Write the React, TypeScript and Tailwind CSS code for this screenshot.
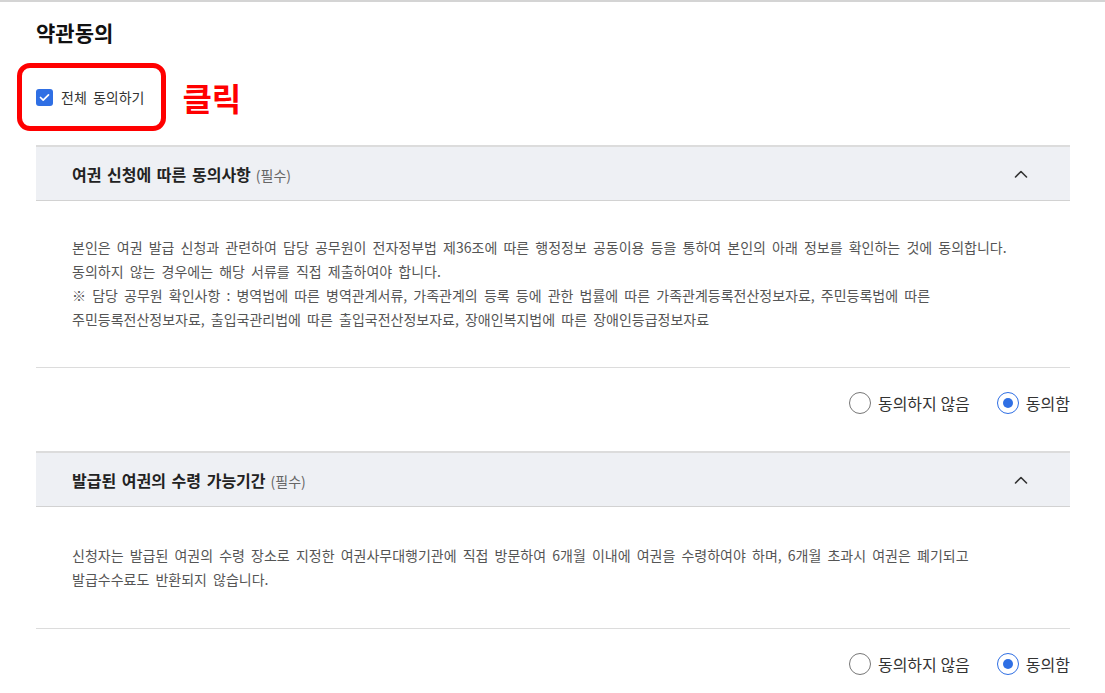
import React, { useState } from "react"

const FONT = "font-['Noto_Sans_CJK_KR','Noto_Sans',sans-serif]"

type Terms = {
  id: string
  title: string
  body: string[]
  bodyPad: string
}

const TERMS: Terms[] = [
  {
    id: "share",
    title: "여권 신청에 따른 동의사항",
    body: [
      "본인은 여권 발급 신청과 관련하여 담당 공무원이 전자정부법 제36조에 따른 행정정보 공동이용 등을 통하여 본인의 아래 정보를 확인하는 것에 동의합니다.",
      "동의하지 않는 경우에는 해당 서류를 직접 제출하여야 합니다.",
      "※ 담당 공무원 확인사항 : 병역법에 따른 병역관계서류, 가족관계의 등록 등에 관한 법률에 따른 가족관계등록전산정보자료, 주민등록법에 따른",
      "주민등록전산정보자료, 출입국관리법에 따른 출입국전산정보자료, 장애인복지법에 따른 장애인등급정보자료",
    ],
    bodyPad: "pt-[34px] pb-[36px]",
  },
  {
    id: "period",
    title: "발급된 여권의 수령 가능기간",
    body: [
      "신청자는 발급된 여권의 수령 장소로 지정한 여권사무대행기관에 직접 방문하여 6개월 이내에 여권을 수령하여야 하며, 6개월 초과시 여권은 폐기되고",
      "발급수수료도 반환되지 않습니다.",
    ],
    bodyPad: "pt-[36px] pb-[37px]",
  },
]

function ChevronUp() {
  return (
    <svg width="14" height="8" viewBox="0 0 14 8" fill="none">
      <path d="M1.5 7L7 1.5L12.5 7" stroke="#333" strokeWidth="1.6" strokeLinecap="round" strokeLinejoin="round" />
    </svg>
  )
}

function Radio({ checked, label, onClick }: { checked: boolean; label: string; onClick: () => void }) {
  return (
    <button className="flex items-center gap-[7px]" onClick={onClick}>
      <span
        className={
          checked
            ? "flex h-[22px] w-[22px] items-center justify-center rounded-full border-[1.5px] border-[#2f6fe4] bg-white"
            : "flex h-[22px] w-[22px] items-center justify-center rounded-full border-[1.5px] border-[#777] bg-white"
        }
      >
        {checked && <span className="h-[10px] w-[10px] rounded-full bg-[#2f6fe4]" />}
      </span>
      <span className="text-[16px] text-[#333]">{label}</span>
    </button>
  )
}

function TermsSection({ terms, agreed, onChange }: { terms: Terms; agreed: boolean; onChange: (v: boolean) => void }) {
  const [open, setOpen] = useState(true)
  return (
    <section>
      <button
        className="flex h-[56px] w-full items-center justify-between border-t-2 border-b border-t-[#dcdcdc] border-b-[#d2d2d2] bg-[#eef0f4] pl-[36px] pr-[42px]"
        onClick={() => setOpen((v) => !v)}
      >
        <span className="flex items-baseline gap-[5px]">
          <span className="text-[16px] font-bold text-[#222] [word-spacing:2px]">{terms.title}</span>
          <span className="text-[14px] text-[#666]">(필수)</span>
        </span>
        <ChevronUp />
      </button>
      {open && (
        <div className={`border-b border-[#dcdcdc] px-[36px] ${terms.bodyPad}`}>
          {terms.body.map((line, i) => (
            <p key={i} className="text-[14px] leading-[24px] text-[#555]">
              {line}
            </p>
          ))}
        </div>
      )}
      <div className="flex h-[70px] items-center justify-end gap-[27px]">
        <Radio checked={!agreed} label="동의하지 않음" onClick={() => onChange(false)} />
        <Radio checked={agreed} label="동의함" onClick={() => onChange(true)} />
      </div>
    </section>
  )
}

export default function App() {
  const [agreed, setAgreed] = useState<Record<string, boolean>>({ share: true, period: true })
  const allAgreed = TERMS.every((t) => agreed[t.id])

  return (
    <div className={`${FONT} min-h-screen border-t-2 border-[#d4d4d4] bg-white pl-[36px] pr-[35px] [word-spacing:3px]`}>
      <h2 className="pt-[15px] text-[21px] font-bold leading-[30px] text-[#111]">약관동의</h2>

      {/* agree-all row with the red "click" annotation over it */}
      <div className="relative mt-[39px] mb-[37px] flex h-[22px] items-center">
        <div className="pointer-events-none absolute -top-[23px] -left-[19px] h-[68px] w-[149px] rounded-[13px] border-[5px] border-[#ff0000]" />
        <label className="flex cursor-pointer items-center gap-[8px]">
          <span
            className={
              allAgreed
                ? "flex h-[17px] w-[17px] items-center justify-center rounded-[3px] bg-[#2f6fe4]"
                : "flex h-[17px] w-[17px] items-center justify-center rounded-[3px] border border-[#999] bg-white"
            }
            onClick={() => setAgreed({ share: !allAgreed, period: !allAgreed })}
          >
            {allAgreed && (
              <svg width="11" height="9" viewBox="0 0 11 9" fill="none">
                <path d="M1.5 4.5L4.2 7.2L9.5 1.8" stroke="white" strokeWidth="1.7" strokeLinecap="round" strokeLinejoin="round" />
              </svg>
            )}
          </span>
          <span className="text-[14px] text-[#333]">전체 동의하기</span>
        </label>
        <span className="ml-[38px] text-[32px] font-bold leading-none text-[#ff0000]">클릭</span>
      </div>

      {TERMS.map((t, i) => (
        <div key={t.id} className={i > 0 ? "mt-[13px]" : ""}>
          <TermsSection
            terms={t}
            agreed={agreed[t.id]}
            onChange={(v) => setAgreed((prev) => ({ ...prev, [t.id]: v }))}
          />
        </div>
      ))}
    </div>
  )
}
